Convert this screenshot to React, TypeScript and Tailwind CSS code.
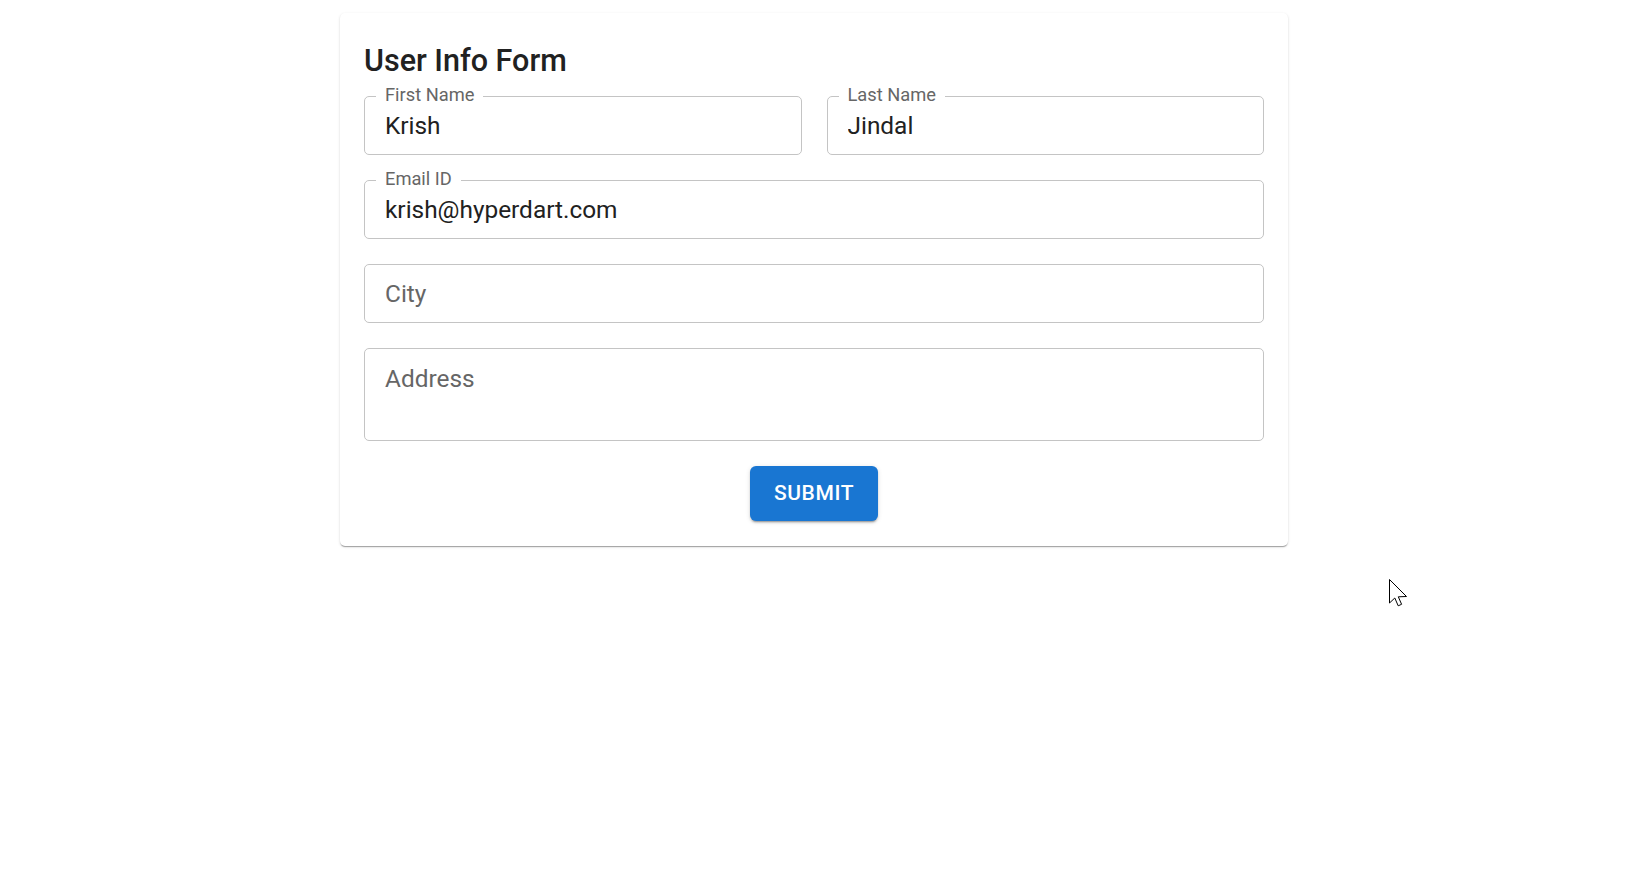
import React from 'react'

type FieldProps = {
  label?: string
  value?: string
  placeholder?: string
  multiline?: boolean
}

function Field({ label, value, placeholder, multiline }: FieldProps) {
  return (
    <div
      className={`relative rounded-[5px] border border-[#c4c4c4] bg-white ${
        multiline ? 'h-[93px]' : 'h-[59px]'
      }`}
    >
      {label && (
        <span className="absolute -top-[11px] left-[11px] bg-white px-[9px] text-[18.3px] leading-[18px] text-[#666666]">
          {label}
        </span>
      )}
      {multiline ? (
        <textarea
          readOnly
          placeholder={placeholder}
          className="h-full w-full resize-none bg-transparent pl-[20px] pr-5 pt-[16px] text-[24.4px] leading-[28px] text-[#212121] outline-none placeholder:text-[#666666]"
        />
      ) : (
        <input
          readOnly
          value={value ?? ''}
          placeholder={placeholder}
          className="h-full w-full bg-transparent pl-[20px] pr-5 text-[24.4px] text-[#212121] outline-none placeholder:text-[#666666]"
        />
      )}
    </div>
  )
}

export default function App() {
  return (
    <main className="relative min-h-screen w-full bg-white font-['Roboto','Liberation_Sans',sans-serif]">
      <div className="pr-4 pt-[13px]">
        {/* Card */}
        <form className="mx-auto w-[948px] rounded-[5px] bg-white px-6 pt-7 pb-[25px] shadow-[0px_2px_1px_-1px_rgba(0,0,0,0.2),0px_1px_1px_0px_rgba(0,0,0,0.14),0px_1px_3px_0px_rgba(0,0,0,0.12)]">
          <h1 className="mb-[15px] text-[30.5px] leading-[40px] font-medium text-[#212121]">
            User Info Form
          </h1>

          <div className="flex flex-col gap-[25px]">
            <div className="grid grid-cols-2 gap-[25px]">
              <Field label="First Name" value="Krish" />
              <Field label="Last Name" value="Jindal" />
            </div>
            <Field label="Email ID" value="krish@hyperdart.com" />
            <Field placeholder="City" />
            <Field placeholder="Address" multiline />

            <div className="flex justify-center">
              <button
                type="button"
                className="h-[55px] rounded-[6px] bg-[#1976d2] px-6 text-[21px] font-medium uppercase tracking-[0.6px] text-white shadow-[0px_3px_1px_-2px_rgba(0,0,0,0.2),0px_2px_2px_0px_rgba(0,0,0,0.14),0px_1px_5px_0px_rgba(0,0,0,0.12)]"
              >
                Submit
              </button>
            </div>
          </div>
        </form>
      </div>

      {/* Mouse pointer */}
      <svg
        className="pointer-events-none absolute left-[1389px] top-[579px]"
        width="19"
        height="28"
        viewBox="0 0 19 28"
      >
        <path
          d="M0.5 0.5 L0.5 24 L5.8 19 L9.2 26.8 L12.6 25.3 L9.3 17.8 L17.5 17.5 Z"
          fill="#ffffff"
          stroke="#000000"
          strokeWidth="1"
          strokeLinejoin="miter"
        />
      </svg>
    </main>
  )
}
